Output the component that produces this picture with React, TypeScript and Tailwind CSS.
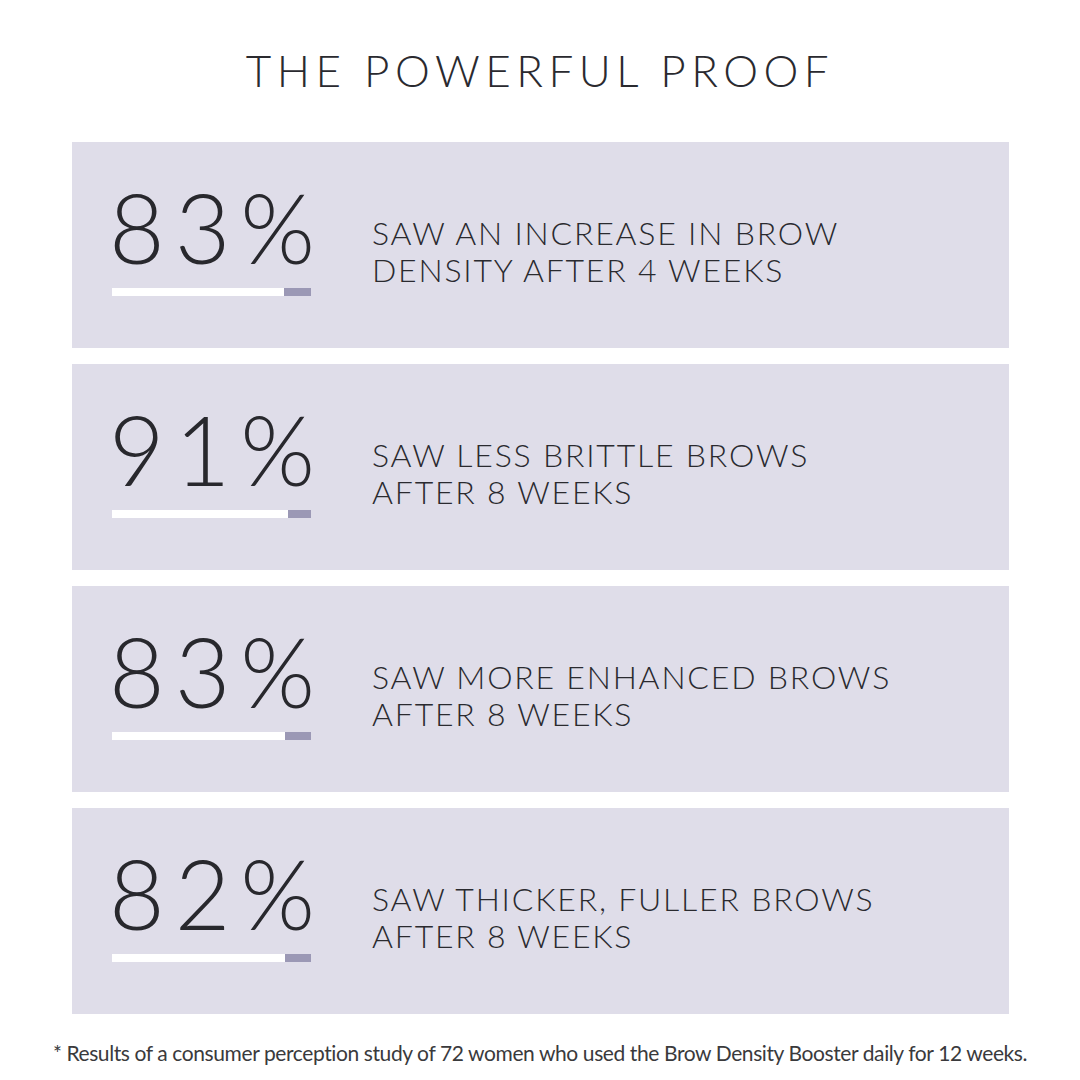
const stats = [
  { value: '83%', lines: ['SAW AN INCREASE IN BROW', 'DENSITY AFTER 4 WEEKS'], fill: 172 },
  { value: '91%', lines: ['SAW LESS BRITTLE BROWS', 'AFTER 8 WEEKS'], fill: 176 },
  { value: '83%', lines: ['SAW MORE ENHANCED BROWS', 'AFTER 8 WEEKS'], fill: 173 },
  { value: '82%', lines: ['SAW THICKER, FULLER BROWS', 'AFTER 8 WEEKS'], fill: 173 },
];

function StatCard({ value, lines, fill }: { value: string; lines: string[]; fill: number }) {
  return (
    <div className="flex h-[206px] w-[937px] bg-[#dfdde9] pl-[40px]">
      <div className="flex w-[260px] flex-col pt-[37px]">
        <div className="-ml-[3px] text-[96px] font-light leading-none tracking-[10px] text-[#28282d]">{value}</div>
        <div className="mt-[13px] flex h-[8px] w-[199px]">
          <div className="h-full bg-white" style={{ width: fill }} />
          <div className="h-full flex-1 bg-[#9b98b5]" />
        </div>
      </div>
      <div className="pt-[72px] text-[32px] font-light leading-[37px] tracking-[1.8px] text-[#2a2a2f]">
        {lines.map((line) => (
          <div key={line}>{line}</div>
        ))}
      </div>
    </div>
  );
}

export default function App() {
  return (
    <div className="h-[1080px] w-[1080px] bg-white font-['Lato',sans-serif]">
      <div className="pt-[48px] text-center text-[44px] font-light leading-none tracking-[5.5px] text-[#2a2a2f]">
        THE POWERFUL PROOF
      </div>
      <div className="ml-[72px] mt-[50px] flex flex-col gap-[16px]">
        {stats.map((s, i) => (
          <StatCard key={i} {...s} />
        ))}
      </div>
      <div className="mt-[28px] text-center text-[21px] leading-none tracking-[-0.4px] text-[#3a3a3c]">
        * Results of a consumer perception study of 72 women who used the Brow Density Booster daily for 12 weeks.
      </div>
    </div>
  );
}
